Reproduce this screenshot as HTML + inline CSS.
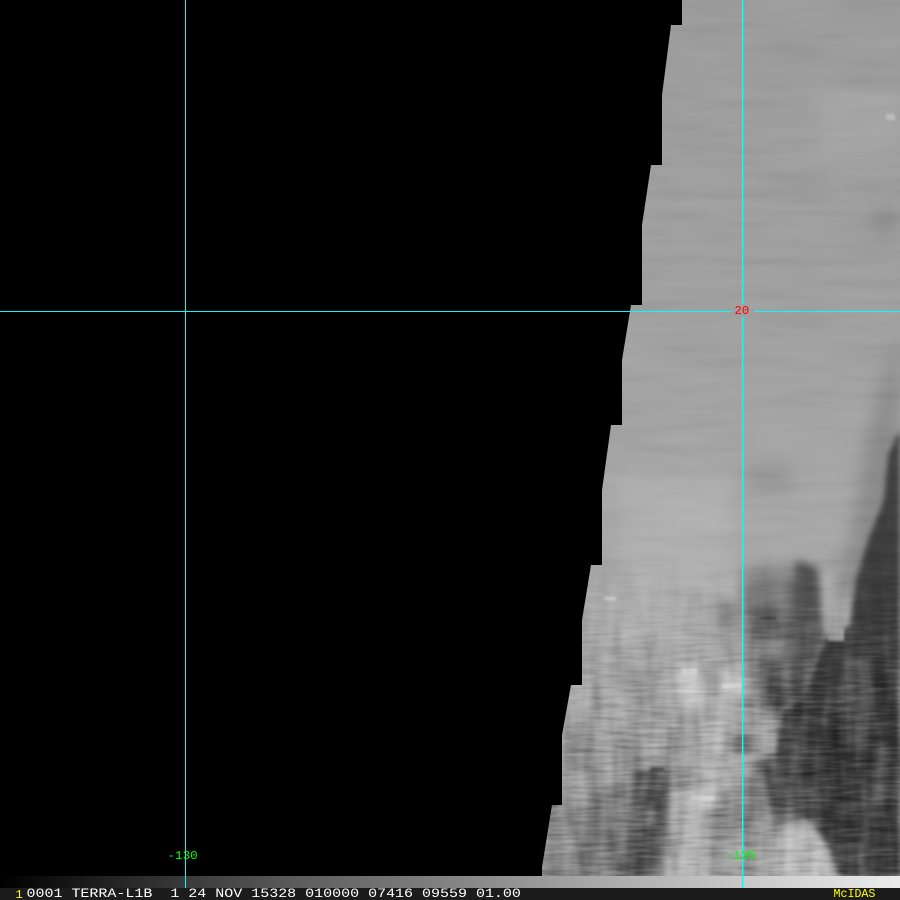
<!DOCTYPE html>
<html><head><meta charset="utf-8"><style>
html,body{margin:0;padding:0;background:#000;width:900px;height:900px;overflow:hidden}
svg{display:block;position:absolute;left:0;top:0}
text{font-family:"Liberation Mono",monospace}
</style></head><body>
<svg width="900" height="900" viewBox="0 0 900 900" xmlns="http://www.w3.org/2000/svg">
<defs>
<clipPath id="sw"><polygon points="682,0 900,0 900,876 542,876 542,867 552,805 562,805 562,735 571,685 582,685 582,620 591,565 602,565 602,490 611,425 622,425 622,360 631,305 642,305 642,225 651,165 662,165 662,95 671,25 682,25"/></clipPath>
<linearGradient id="bg" x1="0" y1="0" x2="0" y2="1">
<stop offset="0" stop-color="#9c9c9c"/><stop offset=".35" stop-color="#a0a0a0"/><stop offset=".6" stop-color="#a8a8a8"/><stop offset=".8" stop-color="#a0a0a0"/><stop offset="1" stop-color="#8c8c8c"/>
</linearGradient>
<linearGradient id="cb"><stop offset="0" stop-color="#000"/><stop offset=".33" stop-color="#5c5c5c"/><stop offset=".66" stop-color="#a8a8a8"/><stop offset="1" stop-color="#ebebeb"/></linearGradient>
<linearGradient id="fade" x1="0" y1="0" x2="0" y2="1"><stop offset="0" stop-color="#000"/><stop offset=".6" stop-color="#000"/><stop offset=".78" stop-color="#fff"/><stop offset="1" stop-color="#fff"/></linearGradient>
<mask id="lowm"><rect width="900" height="900" fill="url(#fade)"/></mask>
<filter id="b8" x="-40%" y="-40%" width="180%" height="180%"><feGaussianBlur stdDeviation="9"/></filter>
<filter id="b5" x="-40%" y="-40%" width="180%" height="180%"><feGaussianBlur stdDeviation="4.5"/></filter>
<filter id="b3" x="-30%" y="-30%" width="160%" height="160%"><feGaussianBlur stdDeviation="3"/></filter>
<filter id="b1" x="-30%" y="-30%" width="160%" height="160%"><feGaussianBlur stdDeviation="1.2"/></filter>
<filter id="t1" x="0" y="0" width="100%" height="100%" color-interpolation-filters="sRGB"><feTurbulence type="fractalNoise" baseFrequency="0.012 0.09" numOctaves="2" seed="4"/><feColorMatrix values="1 0 0 0 0 1 0 0 0 0 1 0 0 0 0 0 0 0 0 1"/></filter>
<filter id="t2" x="0" y="0" width="100%" height="100%" color-interpolation-filters="sRGB"><feTurbulence type="fractalNoise" baseFrequency="0.03 0.3" numOctaves="2" seed="9"/><feColorMatrix values="1.4 0 0 0 -.2 1.4 0 0 0 -.2 1.4 0 0 0 -.2 0 0 0 0 1"/></filter>
<filter id="t3" x="0" y="0" width="100%" height="100%" color-interpolation-filters="sRGB"><feTurbulence type="fractalNoise" baseFrequency="0.07 0.018" numOctaves="2" seed="2"/><feColorMatrix values="1.3 0 0 0 -.15 1.3 0 0 0 -.15 1.3 0 0 0 -.15 0 0 0 0 1"/></filter>
</defs>
<rect width="900" height="900" fill="#000"/>
<g clip-path="url(#sw)">
<g style="isolation:isolate">
<rect width="900" height="880" fill="url(#bg)"/>
<g filter="url(#b8)">
<rect x="820" y="90" width="80" height="70" fill="#a6a6a6"/>
<ellipse cx="885" cy="222" rx="14" ry="12" fill="#8a8a8a"/>
<rect x="760" y="180" width="60" height="12" fill="#969696"/>
<polygon points="900,330 870,420 850,540 830,590 900,620" fill="#8a8a8a"/>
<rect x="745" y="465" width="45" height="24" fill="#949494"/>
<rect x="620" y="480" width="110" height="120" fill="#b0b0b0"/>
<rect x="600" y="590" width="120" height="70" fill="#acacac"/>
<rect x="570" y="690" width="90" height="40" fill="#a0a0a0"/>
<polygon points="542,876 552,815 620,795 680,770 660,876" fill="#7e7e7e"/>
<rect x="700" y="600" width="50" height="190" fill="#a2a2a2"/>
<rect x="745" y="570" width="75" height="70" fill="#7a7a7a"/>
<rect x="752" y="640" width="40" height="70" fill="#7c7c7c"/>
</g>
<g filter="url(#b3)">
<polygon points="900,430 888,455 884,500 868,540 856,580 850,625 824,640 812,672 800,700 782,712 775,760 792,800 812,826 830,850 838,876 900,876" fill="#3e3e3e"/>
<polygon points="900,440 900,520 886,530 890,460" fill="#404040"/>
</g>
<g filter="url(#b5)">
<polygon points="796,560 818,570 822,640 806,700 786,700 790,620" fill="#525252"/>
<polygon points="750,608 780,604 784,636 756,640" fill="#5a5a5a"/>
<polygon points="760,655 780,660 786,712 766,708" fill="#585858"/>
<polygon points="722,600 740,604 738,628 720,624" fill="#858585"/>
<polygon points="730,738 752,736 756,750 728,752" fill="#6e6e6e"/>
<polygon points="755,765 790,745 812,790 815,818 775,820" fill="#505050"/>
<polygon points="745,780 765,775 770,815 750,820" fill="#808080"/>
<polygon points="634,772 664,766 672,820 668,876 628,876" fill="#545454"/>
<polygon points="588,800 628,786 632,876 582,876" fill="#747474"/>
<polygon points="552,824 584,818 586,876 544,876" fill="#8c8c8c"/>
<rect x="647" y="806" width="8" height="20" fill="#929292"/>
<polygon points="672,790 702,786 706,850 668,852" fill="#b4b4b4"/>
<polygon points="678,668 698,664 700,708 680,712" fill="#c6c6c6"/>
<polygon points="720,670 744,668 748,696 722,694" fill="#c0c0c0"/>
<polygon points="690,790 718,786 722,808 692,810" fill="#c4c4c4"/>
<polygon points="702,720 728,716 730,790 706,790" fill="#b2b2b2"/>
<polygon points="775,832 812,824 838,880 762,880" fill="#bcbcbc"/>
<polygon points="665,854 708,850 712,880 660,880" fill="#b2b2b2"/>
<polygon points="726,846 764,844 768,880 728,880" fill="#9e9e9e"/>
<polygon points="822,572 836,570 832,622 824,618" fill="#b0b0b0"/>
<rect x="846" y="660" width="24" height="90" fill="#565656"/>
<rect x="875" y="760" width="14" height="60" fill="#4e4e4e"/>
</g>
<g filter="url(#b1)">
<rect x="828" y="626" width="16" height="15" fill="#9e9e9e"/>
<rect x="886" y="114" width="9" height="6" fill="#c0c0c0"/>
<rect x="682" y="669" width="15" height="5" fill="#d4d4d4"/>
<rect x="722" y="684" width="20" height="4" fill="#d6d6d6"/>
<rect x="692" y="796" width="22" height="4" fill="#d4d4d4"/>
<rect x="604" y="597" width="12" height="3" fill="#cccccc"/>
<rect x="650" y="768" width="14" height="2" fill="#2c2c2c"/>
<rect x="760" y="617" width="16" height="2" fill="#303030"/>
</g>
<g style="mix-blend-mode:soft-light" opacity=".14"><rect width="900" height="880" filter="url(#t1)"/></g>
<g mask="url(#lowm)" style="mix-blend-mode:soft-light" opacity=".5"><rect width="900" height="880" filter="url(#t3)"/></g>
<g mask="url(#lowm)" style="mix-blend-mode:soft-light" opacity=".4"><rect width="900" height="880" filter="url(#t2)"/></g>
</g>
</g>
<rect x="0" y="876" width="900" height="12" fill="url(#cb)"/>
<rect x="0" y="888" width="900" height="12" fill="#1c1c1c"/>
<rect x="185" y="0" width="1" height="888" fill="#0ff"/>
<rect x="742" y="0" width="1.4" height="304" fill="#0ff"/>
<rect x="742" y="317" width="1.4" height="571" fill="#0ff"/>
<rect x="0" y="311" width="732" height="1" fill="#0ff"/>
<rect x="754" y="311" width="146" height="1" fill="#0ff"/>
<text transform="translate(734.5 314) scale(1.02 1)" font-size="12" fill="#f00">20</text>
<text transform="translate(167.5 859) scale(1.05 1)" font-size="12" fill="#0f0">-130</text>
<text transform="translate(725.5 859) scale(1.05 1)" font-size="12" fill="#0f0">-135</text>
<text transform="translate(15.5 898)" font-size="12" fill="#ff0">1</text>
<text transform="translate(26.5 897) scale(1.154 1)" font-size="13" fill="#fff" xml:space="preserve">0001 TERRA-L1B  1 24 NOV 15328 010000 07416 09559 01.00</text>
<text transform="translate(833.5 897) scale(.97 1)" font-size="12" fill="#ff0">McIDAS</text>
</svg>
</body></html>
